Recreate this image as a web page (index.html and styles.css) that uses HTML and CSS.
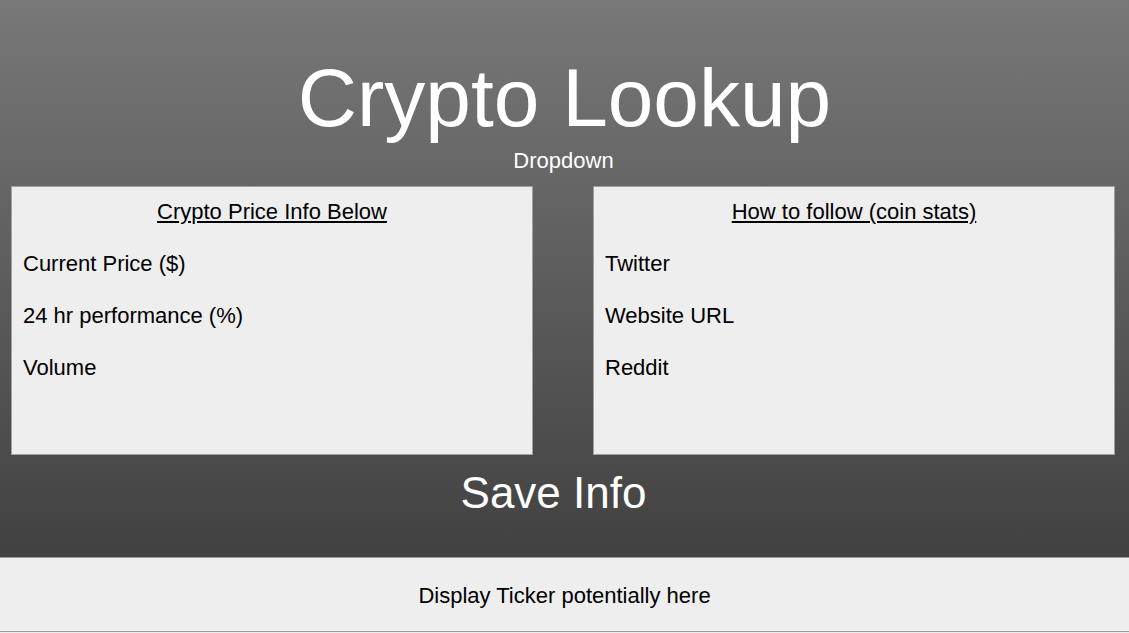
FILE: index.html
```html
<!DOCTYPE html>
<html lang="en">
<head>
<meta charset="utf-8">
<title>Crypto Lookup</title>
<link rel="stylesheet" href="styles.css">
</head>
<body>
<main class="main">
  <header class="header">
    <h1 class="title">Crypto Lookup</h1>
    <div class="dropdown">Dropdown</div>
  </header>
  <section class="cards">
    <div class="card">
      <h2 class="card-title">Crypto Price Info Below</h2>
      <p class="card-item">Current Price ($)</p>
      <p class="card-item">24 hr performance (%)</p>
      <p class="card-item">Volume</p>
    </div>
    <div class="card">
      <h2 class="card-title">How to follow (coin stats)</h2>
      <p class="card-item">Twitter</p>
      <p class="card-item">Website URL</p>
      <p class="card-item">Reddit</p>
    </div>
  </section>
  <div class="save">Save Info</div>
</main>
<footer class="footer">Display Ticker potentially here</footer>
</body>
</html>
```
FILE: styles.css
```css
html, body {
  margin: 0;
  height: 100%;
}
body {
  display: flex;
  flex-direction: column;
  font-family: "Liberation Sans", Arial, sans-serif;
  color: #000;
  background: #eeeeee;
}
.main {
  flex: 1;
  display: flex;
  flex-direction: column;
  background: linear-gradient(to bottom, #787878 0%, #414141 100%);
}
.header {
  display: flex;
  flex-direction: column;
  align-items: center;
  padding-top: 51px;
  color: #fff;
}
.title {
  margin: 0;
  font-size: 82px;
  font-weight: normal;
  line-height: normal;
}
.dropdown {
  margin-top: 3px;
  margin-left: -2px;
  font-size: 22px;
  line-height: 25px;
}
.cards {
  display: flex;
  gap: 60px;
  padding: 0 14px 0 11px;
  margin-top: 13px;
}
.card {
  flex: 1;
  height: 267px;
  background: #eeeeee;
  border: 1px solid #a0a0a0;
  padding: 0 11px;
}
.card-title {
  margin: 12px 0 0;
  text-align: center;
  font-size: 22px;
  font-weight: normal;
  line-height: 25px;
  text-decoration: underline;
}
.card-item {
  margin: 27px 0 0;
  font-size: 22px;
  line-height: 25px;
}
.save {
  margin-top: 13px;
  padding-right: 22px;
  text-align: center;
  color: #fff;
  font-size: 44px;
  line-height: 50px;
}
.footer {
  box-sizing: border-box;
  height: 75px;
  margin-bottom: 1px;
  padding-top: 2px;
  display: flex;
  align-items: center;
  justify-content: center;
  border-top: 1px solid #9a9a9a;
  border-bottom: 1px solid #9a9a9a;
  font-size: 22px;
}
```
